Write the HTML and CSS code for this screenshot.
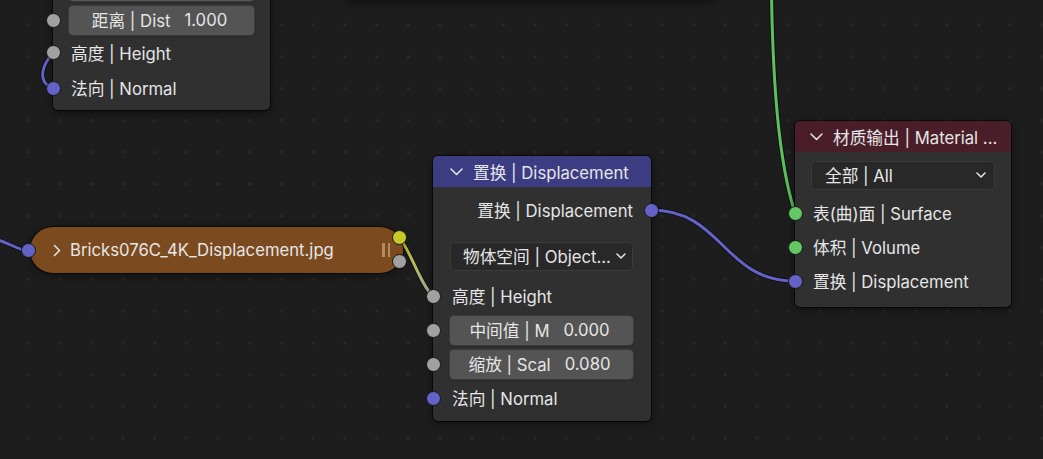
FILE: index.html
```html
<!DOCTYPE html>
<html lang="zh">
<head>
<meta charset="utf-8">
<title>Node Editor</title>
<link rel="stylesheet" href="styles.css">
</head>
<body>
<div class="canvas">
  <svg class="links" width="1043" height="459" viewBox="0 0 1043 459">
    <defs>
      <linearGradient id="gy" gradientUnits="userSpaceOnUse" x1="399" y1="238" x2="433" y2="296">
        <stop offset="0" stop-color="#c7c729"/>
        <stop offset="1" stop-color="#a1a1a1"/>
      </linearGradient>
    </defs>
    <g class="outline">
      <path d="M49 58 C42 68, 38 82, 52 88"/>
      <path d="M-5 239 C10 243, 18 250, 28 251"/>
      <path d="M771.5 -5 C773 80, 778 160, 795 213"/>
      <path d="M651 210 C723 210, 723 281, 795 281"/>
      <path d="M399 238 C410 248, 420 285, 433 296"/>
    </g>
    <path class="lk blue" d="M49 58 C42 68, 38 82, 52 88"/>
    <path class="lk blue" d="M-5 239 C10 243, 18 250, 28 251"/>
    <path class="lk green" d="M771.5 -5 C773 80, 778 160, 795 213"/>
    <path class="lk blue" d="M651 210 C723 210, 723 281, 795 281"/>
    <path class="lk" stroke="url(#gy)" d="M399 238 C410 248, 420 285, 433 296"/>
  </svg>

  <div class="node n-above"></div>

  <div class="node n-geo">
    <div class="row"><span class="sock grey"></span><div class="field"></div></div>
    <div class="row"><span class="sock grey"></span><div class="field"><span>距离 | Dist</span><span>1.000</span></div></div>
    <div class="row r-h"><span class="sock grey"></span><span class="lbl">高度 | Height</span></div>
    <div class="row r-n"><span class="sock blue"></span><span class="lbl">法向 | Normal</span></div>
  </div>

  <div class="tex">
    <span class="sock blue in"></span>
    <svg class="chev-r" width="8" height="13" viewBox="0 0 8 13"><polyline points="1.5,1.5 6.5,6.5 1.5,11.5"/></svg>
    <span class="tex-name">Bricks076C_4K_Displacement.jpg</span>
    <span class="grip"><i></i><i></i></span>
    <span class="sock yellow out1"></span>
    <span class="sock grey out2"></span>
  </div>

  <div class="node n-disp">
    <div class="head head-vec">
      <svg class="chev-d" width="13" height="8" viewBox="0 0 13 8"><polyline points="1,1 6.5,6.5 12,1"/></svg>
      <span>置换 | Displacement</span>
    </div>
    <div class="body">
      <div class="row out"><span class="lbl">置换 | Displacement</span><span class="sock blue right"></span></div>
      <div class="row gap-l"><div class="menu"><span>物体空间 | Object...</span><svg class="chev-s" width="10" height="6" viewBox="0 0 10 6"><polyline points="1,1 5,5 9,1"/></svg></div></div>
      <div class="row gap-s"><span class="sock grey"></span><span class="lbl">高度 | Height</span></div>
      <div class="row"><span class="sock grey"></span><div class="field"><span>中间值 | M</span><span>0.000</span></div></div>
      <div class="row"><span class="sock grey"></span><div class="field"><span>缩放 | Scal</span><span>0.080</span></div></div>
      <div class="row"><span class="sock blue"></span><span class="lbl">法向 | Normal</span></div>
    </div>
  </div>

  <div class="node n-out">
    <div class="head head-out">
      <svg class="chev-d" width="13" height="8" viewBox="0 0 13 8"><polyline points="1,1 6.5,6.5 12,1"/></svg>
      <span class="head-txt">材质输出 | Material ...</span>
    </div>
    <div class="body body-out">
      <div class="row"><div class="menu menu-all"><span>全部 | All</span><svg class="chev-s" width="10" height="6" viewBox="0 0 10 6"><polyline points="1,1 5,5 9,1"/></svg></div></div>
      <div class="row gap-xs"><span class="sock green"></span><span class="lbl">表(曲)面 | Surface</span></div>
      <div class="row"><span class="sock green"></span><span class="lbl">体积 | Volume</span></div>
      <div class="row"><span class="sock blue"></span><span class="lbl">置换 | Displacement</span></div>
    </div>
  </div>
</div>
</body>
</html>
```

FILE: styles.css
```css
* { box-sizing: border-box; }
html, body { margin: 0; padding: 0; background: #1d1d1d; }
body {
  font-family: "Inter", "Noto Sans CJK SC", sans-serif;
  font-size: 16.7px;
  color: #e6e6e6;
}
.canvas {
  position: relative;
  width: 1043px;
  height: 459px;
  overflow: hidden;
  background-color: #1d1d1d;
  background-image: radial-gradient(circle at center, #282828 1.4px, transparent 1.9px);
  background-size: 31.7px 31.8px;
  background-position: 12.2px 9.1px;
}
.links { position: absolute; left: 0; top: 0; z-index: 1; }
.links path { fill: none; }
.outline path { stroke: rgba(10,10,10,0.7); stroke-width: 5; }
.lk { stroke-width: 3; stroke-linecap: round; }
.lk.blue { stroke: #6363c7; }
.lk.green { stroke: #5cc05c; }

.node {
  position: absolute;
  z-index: 2;
  background: #303030;
  border-radius: 5px;
  box-shadow: 0 0 0 1px rgba(0,0,0,0.55), 0 2px 10px rgba(0,0,0,0.55);
}
.n-above { left: 345px; top: -120px; width: 372px; height: 119px; }
.n-geo { left: 53px; top: -41px; width: 217px; height: 151px; padding: 10px 16px 5px 16px; display: flex; flex-direction: column; }
.n-geo .r-h { height: 31px; }
.n-geo .r-n { margin-top: 3px; }
.n-disp { left: 433px; top: 156px; width: 218px; height: 265px; display: flex; flex-direction: column; }
.n-out { left: 795px; top: 121px; width: 216px; height: 186px; display: flex; flex-direction: column; }

.head {
  height: 31px;
  border-radius: 5px 5px 0 0;
  display: flex;
  align-items: center;
  padding-left: 17px;
  gap: 10px;
  white-space: nowrap;
  overflow: hidden;
}
.head-vec { background: #3c3c83; }
.head-out { background: #4a1e29; padding-left: 15px; }
.head-txt { overflow: hidden; }
.chev-d { flex: none; }
.chev-d polyline, .chev-r polyline, .chev-s polyline { fill: none; stroke: #e6e6e6; stroke-width: 1.5; stroke-linecap: round; stroke-linejoin: round; }

.body { padding: 6px 18px 6px 17px; display: flex; flex-direction: column; }
.body-out { padding: 6px 16px 9px 16px; }

.row {
  position: relative;
  height: 34px;
  flex: none;
  display: flex;
  align-items: center;
  white-space: nowrap;
}
.row .lbl { padding-left: 2px; }
.row.out { justify-content: flex-end; }
.gap-l { margin-top: 12px; }
.gap-s { margin-top: 6px; }
.gap-xs { margin-top: 4px; }

.sock {
  position: absolute;
  width: 15px;
  height: 15px;
  border-radius: 50%;
  border: 1.5px solid #141414;
  top: 50%;
  margin-top: -7.5px;
  z-index: 3;
}
.n-geo .row .sock { left: -23.5px; }
.n-disp .row .sock { left: -24.5px; }
.n-disp .row .sock.right { left: auto; right: -25.5px; }
.n-out .row .sock { left: -23.5px; }
.grey { background: #a1a1a1; }
.blue { background: #6363c7; }
.green { background: #63c763; }
.yellow { background: #c7c729; }

.field {
  flex: 1;
  height: 29px;
  background: #545454;
  border-radius: 4px;
  box-shadow: 0 0 0 1px #3a3a3a, 0 1px 2px rgba(0,0,0,0.4);
  display: flex;
  align-items: center;
  justify-content: center;
  gap: 14px;
  padding-right: 4px;
}
.menu {
  flex: 1;
  height: 29px;
  background: #282828;
  border: 1px solid #3a3a3a;
  border-radius: 5px;
  display: flex;
  align-items: center;
  justify-content: space-between;
  padding: 0 6px 0 12px;
}
.menu-all { padding-left: 13px; padding-right: 8px; }

.tex {
  position: absolute;
  z-index: 2;
  left: 30px;
  top: 227px;
  width: 373px;
  height: 46px;
  border-radius: 23px;
  background: #7b4a1f;
  box-shadow: 0 0 0 1px rgba(0,0,0,0.55), 0 2px 10px rgba(0,0,0,0.5);
  display: flex;
  align-items: center;
  padding-left: 23px;
  white-space: nowrap;
}
.chev-r { flex: none; margin-right: 9px; }
.tex-name { flex: 1; }
.grip { display: flex; gap: 3px; margin-right: 13px; }
.grip i { display: block; width: 2.5px; height: 14px; background: rgba(235,205,175,0.5); }
.tex .sock.in { left: -9.5px; top: 23.5px; }
.tex .sock.out1 { left: auto; right: -3.5px; top: 10.5px; }
.tex .sock.out2 { left: auto; right: -3.5px; top: 34.5px; }
```
